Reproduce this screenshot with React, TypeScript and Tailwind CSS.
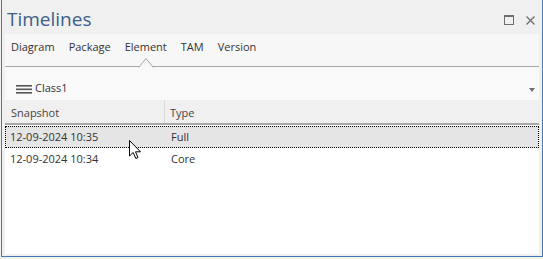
import React from 'react';

const tabs = ['Diagram', 'Package', 'Element', 'TAM', 'Version'];

const rows = [
  { snapshot: '12-09-2024 10:35', type: 'Full', selected: true },
  { snapshot: '12-09-2024 10:34', type: 'Core', selected: false },
];

const font = { fontFamily: '"Open Sans", "Noto Sans", sans-serif' };

const App = () => {
  return (
    <div className="w-[543px] h-[259px] bg-[#f0f0f0] overflow-hidden" style={font}>
      <div className="relative ml-[1px] w-[542px] h-[257px] border-x border-b border-[#4a78b0] bg-[#f0f0f0] flex flex-col">
        {/* title bar */}
        <div className="h-[34px] flex items-start justify-between pl-[5px] pr-[6px]">
          <span className="text-[19px] leading-[20px] mt-[9px] text-[#3d5e8b]">Timelines</span>
          <div className="flex items-center gap-[12px] mt-[15px] mr-[1px]">
            <svg width="10" height="10" viewBox="0 0 10 10">
              <rect x="0.5" y="0.5" width="9" height="9" fill="none" stroke="#6e6e6e" />
              <rect x="0" y="0" width="10" height="2" fill="#6e6e6e" />
            </svg>
            <svg width="9" height="9" viewBox="0 0 9 9">
              <path d="M0.5 0.5 L8.5 8.5 M8.5 0.5 L0.5 8.5" stroke="#6e6e6e" strokeWidth="1.3" />
            </svg>
          </div>
        </div>

        {/* panel */}
        <div className="flex-1 mx-[3px] mb-[2px] bg-white flex flex-col">
          <div className="relative h-[33px] bg-[#f7f7f7] border-b border-[#a8a8a8] flex items-start pt-[5px]">
            <div className="flex -ml-[1px]">
              {tabs.map(t => (
                <span key={t} className="px-[7px] text-[11px] leading-[16px] text-[#333]">
                  {t}
                </span>
              ))}
            </div>
            <svg className="absolute left-[133px] top-[23px]" width="16" height="11" viewBox="0 0 16 11">
              <path d="M0 10 L1 10 L8 1.5 L15 10 L16 10" fill="#f7f7f7" stroke="#a8a8a8" strokeWidth="1" />
              <rect x="1.5" y="10" width="13" height="1" fill="#f9f9f9" />
            </svg>
          </div>

          <div className="h-[33px] bg-[#f9f9f9] flex items-center pl-[11px] pr-[4px] pt-[10px]">
            <svg width="16" height="9" viewBox="0 0 16 9" className="mt-[1px]">
              <rect x="0" y="0" width="16" height="1.6" fill="#555" />
              <rect x="0" y="3.5" width="16" height="1.6" fill="#555" />
              <rect x="0" y="7" width="16" height="1.6" fill="#555" />
            </svg>
            <span className="ml-[3px] text-[11px] text-[#333]">Class1</span>
            <svg width="6" height="4" viewBox="0 0 6 4" className="ml-auto mt-[3px]">
              <path d="M0 0 L6 0 L3 4 Z" fill="#707070" />
            </svg>
          </div>

          <div className="h-[25px] bg-[#f0f0f0] border-b-2 border-[#a8a8a8] flex text-[11px] text-[#444]">
            <div className="w-[160px] border-r border-[#d9d9d9] pl-[6px] pt-[3px] flex items-center">Snapshot</div>
            <div className="flex-1 pl-[5px] pt-[3px] flex items-center">Type</div>
          </div>

          <div className="flex flex-col mt-[1px]">
            {rows.map(r => (
              <div
                key={r.snapshot}
                className={
                  r.selected
                    ? 'h-[22px] flex items-center bg-[#e5e5e5] border border-dotted border-black text-[11px] text-[#333]'
                    : 'h-[22px] flex items-center border border-transparent text-[11px] text-[#333]'
                }
              >
                <div className="w-[160px] pl-[4px]">{r.snapshot}</div>
                <div className="flex-1 pl-[5px]">{r.type}</div>
              </div>
            ))}
          </div>
        </div>

        {/* mouse pointer */}
        <svg className="absolute left-[127px] top-[140px]" width="13" height="20" viewBox="0 0 13 20">
          <path d="M0.5 0.5 L0.5 16 L4.2 12.5 L6.8 18.5 L9 17.5 L6.5 11.8 L11.5 11.8 Z" fill="white" stroke="black" strokeWidth="1" strokeLinejoin="round" />
        </svg>
      </div>
    </div>
  );
};

export default App;
